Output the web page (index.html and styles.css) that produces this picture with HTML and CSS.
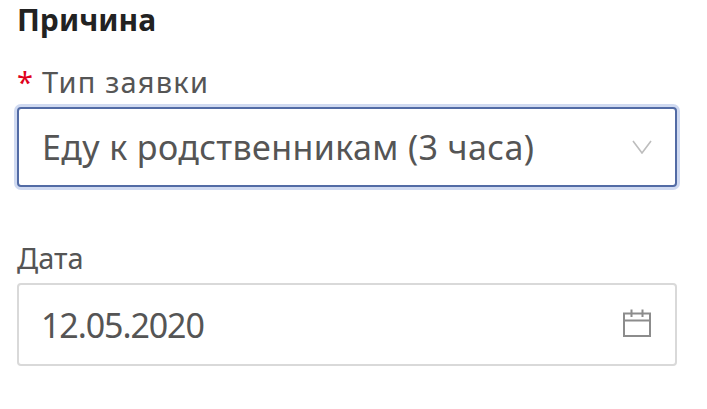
FILE: index.html
```html
<!DOCTYPE html>
<html lang="ru">
<head>
<meta charset="utf-8">
<title>Причина</title>
<link rel="stylesheet" href="styles.css">
</head>
<body>
<main class="form">
  <h2 class="title">Причина</h2>
  <div class="field field-type">
    <label class="label label-wide"><span class="req">*</span>Тип заявки</label>
    <div class="control control-focus">
      <span class="value">Еду к родственникам (3 часа)</span>
      <svg class="icon-chevron" width="20" height="14" viewBox="0 0 20 14" aria-hidden="true"><path d="M1 1 L10 13 L19 1" fill="none" stroke="#bdbdbd" stroke-width="1.6"/></svg>
    </div>
  </div>
  <div class="field field-date">
    <label class="label">Дата</label>
    <div class="control">
      <span class="value value-date">12.05.2020</span>
      <svg class="icon-cal" width="30" height="30" viewBox="0 0 30 30" aria-hidden="true"><path d="M2 5.500H28V28H2ZM2 12.500H28M9.500 1.500V9M20.500 1.500V9" fill="none" stroke="#8c8c8c" stroke-width="2"/></svg>
    </div>
  </div>
</main>
</body>
</html>
```
FILE: styles.css
```css
* { box-sizing: border-box; }
html, body { margin: 0; background: #fff; }
body { font-family: "Noto Sans", sans-serif; color: #4f4f4f; }
.form { width: 707px; height: 409px; padding: 0 30px 0 17px; overflow: hidden; }
.title { margin: 0; font-size: 30px; line-height: 40px; font-weight: 700; color: #222; }
.field-type { margin-top: 22px; }
.field-date { margin-top: 51px; }
.label { display: block; font-size: 29px; line-height: 40px; color: #555; }
.label-wide { letter-spacing: 1.2px; }
.req { color: #e0001b; margin: 0 9px 0 0; letter-spacing: 0; }
.control { display: flex; align-items: center; justify-content: space-between; height: 83px; margin-top: 5px; padding: 0 24px 0 22px; border: 2px solid #d9d9d9; border-radius: 4px; background: #fff; }
.control-focus { height: 80px; padding-left: 23px; border-color: #526ba5; box-shadow: 0 0 0 3px #d0daf1; }
.value { font-size: 34px; line-height: 44px; letter-spacing: .38px; color: #555; }
.value-date { letter-spacing: -1.1px; }
.icon-chevron { margin-right: -1px; }
.icon-cal { margin: 0 -1px 4px 0; }
```
